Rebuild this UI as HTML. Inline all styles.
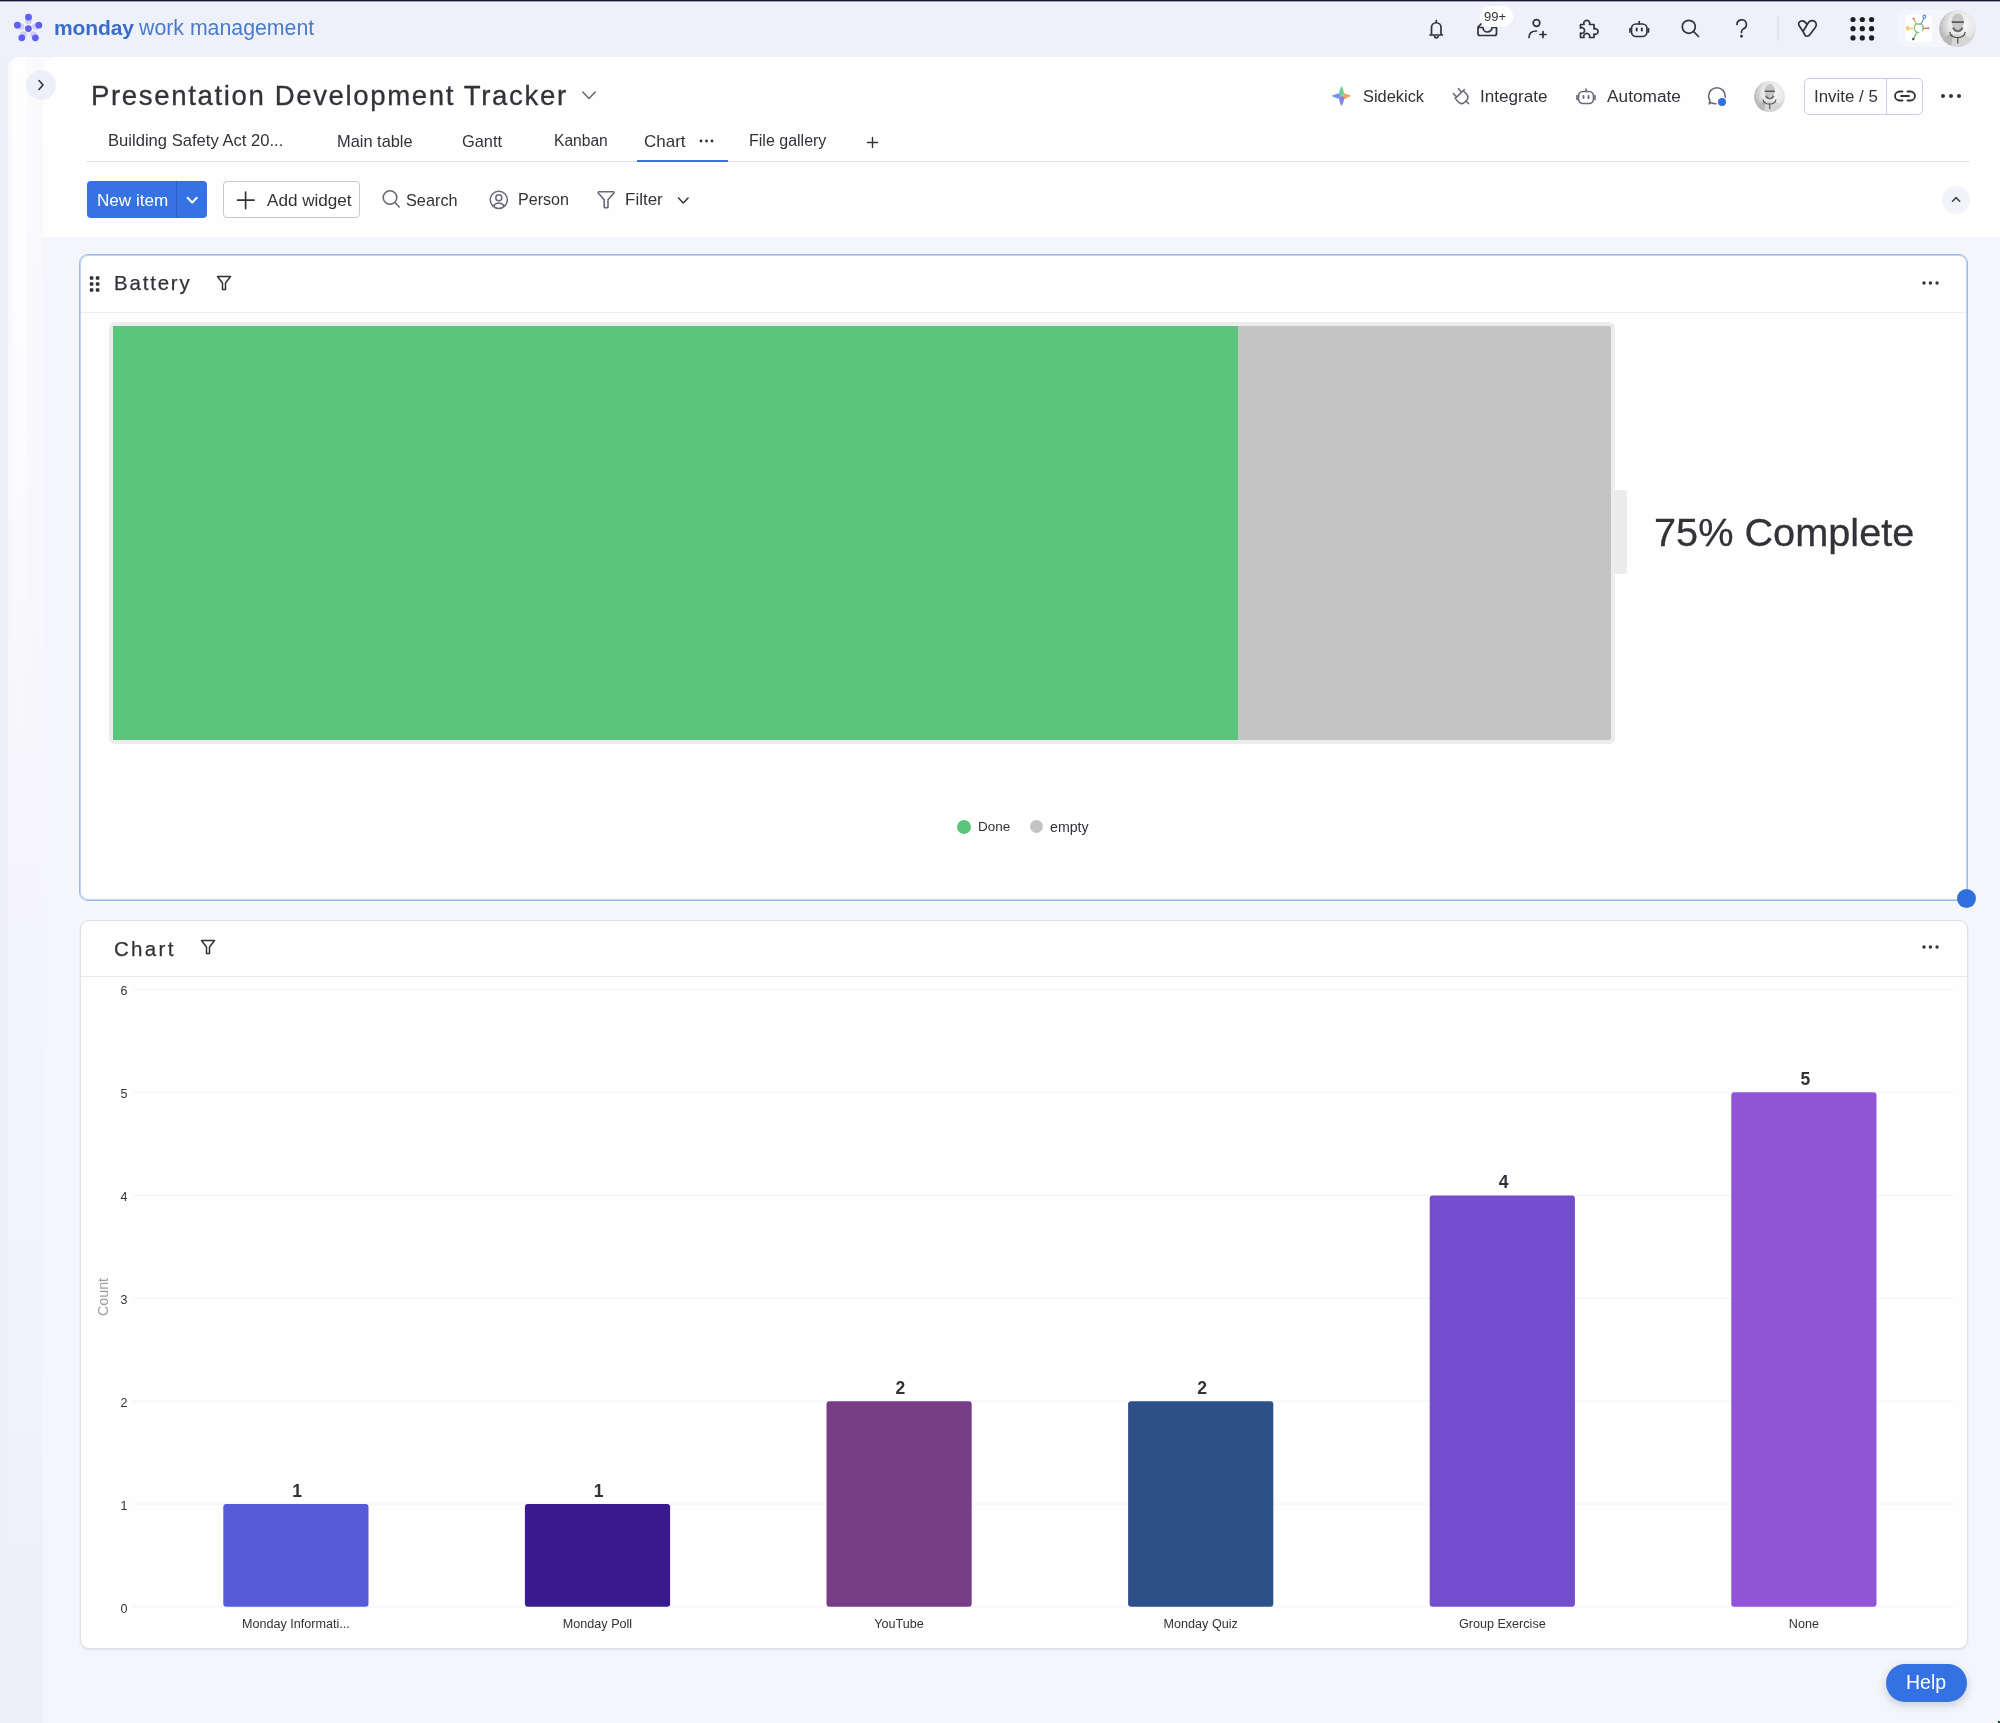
<!DOCTYPE html>
<html><head><meta charset="utf-8">
<style>
*{box-sizing:border-box;margin:0;padding:0}
html,body{width:2000px;height:1723px;overflow:hidden;background:#edf0f9;font-family:"Liberation Sans",sans-serif;color:#323338}
.a{position:absolute}
#topbar{left:0;top:0;width:2000px;height:57px;background:#eef1f9;border-top:2px solid #1d2039}
#side{left:8px;top:57px;width:40px;height:1666px;border-radius:10px 0 0 0;background:linear-gradient(180deg,#fafafd 0,#f8f7fc 450px,#f4f5fb 900px,#f3f4fa 1250px,#edf0f9 1560px)}
#side2{left:12px;top:57px;width:15px;height:700px;border-radius:8px 0 0 0;background:linear-gradient(180deg,#fefeff 0,#fdfdff 200px,rgba(248,247,252,0) 700px)}
#main{left:43px;top:57px;width:1957px;height:180px;background:#fefeff;border-radius:10px 0 0 0}
#dash{left:43px;top:237px;width:1957px;height:1486px;background:#f5f6fb}
.ico{position:absolute}
.t{position:absolute;white-space:nowrap;line-height:1;will-change:transform}
</style></head>
<body>
<svg width="0" height="0" style="position:absolute"><defs>
<radialGradient id="avbg" cx=".62" cy=".38" r=".62"><stop offset="0" stop-color="#fbfbfb"/><stop offset=".6" stop-color="#e6e6e6"/><stop offset="1" stop-color="#b9b9b9"/></radialGradient>
<clipPath id="avc"><circle cx="18.5" cy="18.5" r="18.5"/></clipPath>
<g id="av"><g clip-path="url(#avc)">
<circle cx="18.5" cy="18.5" r="18.5" fill="url(#avbg)"/>
<path d="M1 37C3 28 8 24 18.5 24S34 28 36 37Z" fill="#d6d6d6"/>
<path d="M1 37C3 28 8 24 14 24L12 37Z" fill="#b8b8b8"/>
<ellipse cx="18.8" cy="11.5" rx="6.2" ry="8" fill="#c6c6c6"/>
<path d="M12.8 12.2h12" stroke="#5a5a5a" stroke-width="1.8"/>
<path d="M14 17.5c1.2 2.6 2.8 3.6 4.8 3.6s3.6-1 4.8-3.6" stroke="#6f6f6f" stroke-width="2.2" fill="none"/>
<path d="M10.8 22C11.2 25.5 14.5 27.5 18.5 27.5C22.5 27.5 25.8 25.5 26.2 22M18.8 27.5v6" stroke="#2e2e2e" stroke-width="1.2" fill="none" opacity=".85"/>
</g></g></defs></svg>
<!-- TOP BAR -->
<div id="topbar" class="a"></div>
<div class="a" style="left:0;top:0;width:2000px;height:1px;background:#161a38"></div>
<div class="a" style="left:0;top:1px;width:2000px;height:1px;background:#9a9db2"></div>
<div class="a" style="left:0;top:2px;width:2000px;height:1px;background:#f6f9ff"></div>
<svg class="a" style="left:8px;top:8px" width="40" height="40" viewBox="8 8 40 40">
 <g fill="#c9c6f5" opacity=".8">
  <circle cx="28.5" cy="21" r="3.3"/><circle cx="21" cy="26.5" r="3.3"/><circle cx="35.5" cy="26.5" r="3.3"/><circle cx="23.5" cy="34.5" r="3.3"/><circle cx="33.5" cy="34.5" r="3.3"/>
 </g>
 <g fill="#5f5ff1">
  <circle cx="28.5" cy="17.2" r="3.4"/><circle cx="17.4" cy="25.2" r="3.4"/><circle cx="38.8" cy="25.2" r="3.4"/><circle cx="28.4" cy="28.6" r="3.4"/><circle cx="21.8" cy="37.8" r="3.4"/><circle cx="35.4" cy="37.8" r="3.4"/>
 </g>
</svg>
<div class="t" style="left:54px;top:17px;font-size:21px;font-weight:bold;color:#3a6dc6;letter-spacing:-0.1px">monday</div>
<div class="t" style="left:139px;top:18px;font-size:21.3px;color:#4a7acd">work management</div>

<svg class="a" style="left:1400px;top:0" width="600" height="57" viewBox="1400 0 600 57" fill="none" stroke="#323338" stroke-width="1.7" stroke-linecap="round" stroke-linejoin="round">
 <!-- bell -->
 <path d="M1430 35h12.5M1431.5 35v-7.5a4.75 4.75 0 0 1 9.5 0V35M1436.25 20.5v2.2M1434.5 36.5a1.9 1.9 0 0 0 3.6 0"/>
 <!-- inbox -->
 <path d="M1478 27v6.5a2 2 0 0 0 2 2h14.5a2 2 0 0 0 2-2V27.5h-4.5a4.5 4.5 0 0 1-9 0H1478M1481 24l-3 3"/>
 <!-- person add -->
 <circle cx="1536.5" cy="23" r="3.3"/>
 <path d="M1529 37.5c0-4.5 3.2-6.5 7.5-6.5M1543 31.5v6M1540 34.5h6"/>
 <!-- puzzle -->
 <path d="M1580.5 24.5h3.5a3 3 0 1 1 5.5 0h4.5v4.5a2.8 2.8 0 1 1 0 5v3.5h-4.5a3 3 0 1 0-5.5 0H1580.5v-4.5a2.8 2.8 0 1 0 0-5z"/>
 <!-- robot -->
 <rect x="1631.5" y="24" width="15.5" height="12.5" rx="4.5"/>
 <path d="M1639.25 21.5v2.5M1630 28.5v3.5M1648.5 28.5v3.5"/>
 <path d="M1636.7 28.5v2M1641.8 28.5v2" stroke-width="2"/>
 <!-- search -->
 <circle cx="1688.8" cy="26.8" r="6.5"/>
 <path d="M1693.5 31.5l5 5"/>
 <!-- question -->
 <path d="M1737 24.5a4.7 4.7 0 1 1 6.3 4.4c-1.3.6-1.8 1.4-1.8 2.8v.8"/>
 <circle cx="1741.5" cy="36.2" r="0.6" fill="#323338"/>
 <!-- separator -->
 <path d="M1778 16.5v24" stroke="#d0d4e4" stroke-width="1"/>
 <!-- heart -->
 <path d="M1803 31.5L1799.2 25.8C1797.6 23 1799.6 20.6 1802.5 20.8C1804.5 21 1806 22.5 1807.2 24.5ZM1807.2 24.5C1808.5 22 1810.5 20.6 1812.6 20.7C1815.8 21 1817.2 24.2 1815.6 27L1809.8 34.8C1808.6 36.6 1806 36.8 1804.9 35L1803 31.5"/>
</svg>
<!-- badge -->
<div class="a" style="left:1480px;top:6px;width:33px;height:21px;border-radius:10px;background:#fff"></div>
<div class="t" style="left:1484px;top:10px;font-size:13px;color:#323338">99+</div>
<!-- grid dots -->
<svg class="a" style="left:1848px;top:14px" width="30" height="30" viewBox="0 0 30 30" fill="#1f1f23">
 <circle cx="5" cy="5.5" r="2.6"/><circle cx="14.3" cy="5.5" r="2.6"/><circle cx="23.6" cy="5.5" r="2.6"/>
 <circle cx="5" cy="14.7" r="2.6"/><circle cx="14.3" cy="14.7" r="2.6"/><circle cx="23.6" cy="14.7" r="2.6"/>
 <circle cx="5" cy="23.9" r="2.6"/><circle cx="14.3" cy="23.9" r="2.6"/><circle cx="23.6" cy="23.9" r="2.6"/>
</svg>
<!-- apps box -->
<div class="a" style="left:1898px;top:10px;width:62px;height:37px;border-radius:6px;background:#f5f6fc"></div>
<div class="a" style="left:1905px;top:14.5px;width:27px;height:27.5px;border-radius:5px;background:#fff"></div>
<svg class="a" style="left:1900px;top:10px" width="36" height="36" viewBox="1900 10 36 36" fill="none" stroke-width="1.3" stroke-linecap="round">
 <path d="M1914.3 28.3C1914.3 26 1915 24.5 1916 24H1921.4C1922.5 25 1923.3 26.5 1923.3 28.3L1922.5 30.8M1914.3 28.3C1914.6 30 1915.4 31.5 1916.6 32.3L1918.6 32.4" stroke="#7cc77a"/>
 <path d="M1916 23.6L1914 19.2" stroke="#e8a070"/><circle cx="1913.6" cy="18.6" r="1.2" fill="#e98c7a" stroke="none"/>
 <path d="M1921.4 23.6L1924 18" stroke="#6b9be3"/><circle cx="1924.4" cy="16.6" r="1.5" stroke="#5b8fe0" stroke-width="1.2"/>
 <path d="M1914 28.3H1909.2" stroke="#f0c869"/><circle cx="1907.7" cy="28.3" r="1.6" stroke="#f0c869" stroke-width="1.3" fill="#f7dc95"/>
 <path d="M1923.4 28.3H1927" stroke="#e5646a"/><circle cx="1928.2" cy="28.3" r="1.3" fill="#e98a80" stroke="none"/>
 <path d="M1917 32.3L1913.6 38.6" stroke="#6fbf75"/><circle cx="1913.3" cy="39.1" r="1.3" fill="#3b6e48" stroke="none"/>
</svg>
<!-- avatar top -->
<svg class="a" style="left:1939px;top:10px" width="37" height="37" viewBox="0 0 37 37"><use href="#av"/></svg>

<!-- SIDEBAR + MAIN HEADER -->
<div id="side" class="a"></div>
<div id="side2" class="a"></div>
<div id="dash" class="a"></div>
<div id="main" class="a"></div>
<div class="a" style="left:26px;top:70px;width:30px;height:30px;border-radius:50%;background:#edf0f9"></div>
<svg class="a" style="left:28px;top:72px" width="26" height="26" viewBox="0 0 26 26" fill="none" stroke="#323338" stroke-width="1.6" stroke-linecap="round" stroke-linejoin="round"><path d="M11 8.5l4 4.5-4 4.5"/></svg>

<div class="t" style="left:91px;top:82px;font-size:27.6px;letter-spacing:1.62px;color:#323338;-webkit-text-stroke:0.3px #323338">Presentation Development Tracker</div>
<svg class="a" style="left:580px;top:86px" width="18" height="18" viewBox="0 0 18 18" fill="none" stroke="#676879" stroke-width="1.6" stroke-linecap="round" stroke-linejoin="round"><path d="M2.8 6l6.2 6.5 6.2-6.5"/></svg>

<!-- right header -->
<svg class="a" style="left:1326px;top:82px" width="30" height="28" viewBox="1326 82 30 28">
 <defs><clipPath id="skc"><path d="M1341.5 86C1342.6 87.5 1343.6 91 1344 93.3C1346.5 94 1349.5 94.8 1351.2 96C1349.5 97.2 1346.5 98 1344 98.7C1343.6 101 1342.6 104.5 1341.5 106C1340.4 104.5 1339.4 101 1339 98.7C1336.5 98 1333.5 97.2 1331.6 96C1333.5 94.8 1336.5 94 1339 93.3C1339.4 91 1340.4 87.5 1341.5 86Z"/></clipPath></defs>
 <g clip-path="url(#skc)">
  <path d="M1341.5 96L1326 82H1356Z" fill="#64cf9b"/>
  <path d="M1341.5 96L1356 82V110Z" fill="#e9a962"/>
  <path d="M1341.5 96L1356 102V110H1343Z" fill="#ec6872"/>
  <path d="M1341.5 96L1356 110H1326Z" fill="#8883e6"/>
  <path d="M1341.5 96L1326 110V82Z" fill="#6e95e9"/>
 </g>
</svg>
<div class="t" style="left:1363px;top:87.5px;font-size:16.4px;color:#323338">Sidekick</div>
<svg class="a" style="left:1440px;top:80px" width="40" height="30" viewBox="1440 80 40 30" fill="none" stroke="#676879" stroke-width="1.5" stroke-linecap="round" stroke-linejoin="round">
 <path d="M1455 98.6L1464.4 89.5M1458.4 88.5L1461.1 91.8M1453.3 93.6L1456.4 96.8M1463.2 90.7L1466.3 93.8C1468.4 95.9 1468.4 98.6 1466.3 100.7L1465 102C1463 104 1460.4 104 1458.4 102L1456.3 99.8M1465.8 100.9L1468.7 103.8"/>
</svg>
<div class="t" style="left:1479.5px;top:87.5px;font-size:17.1px;color:#323338">Integrate</div>
<svg class="a" style="left:1575px;top:85px" width="22" height="22" viewBox="0 0 22 22" fill="none" stroke="#676879" stroke-width="1.6" stroke-linecap="round" stroke-linejoin="round">
 <rect x="3.5" y="6.5" width="15" height="12" rx="4.5"/>
 <path d="M11 4v2.5M2 10.5v4M20 10.5v4"/>
 <path d="M8.5 11v2M13.5 11v2" stroke-width="1.9"/>
</svg>
<div class="t" style="left:1607px;top:87.5px;font-size:17.3px;color:#323338">Automate</div>
<svg class="a" style="left:1700px;top:80px" width="32" height="32" viewBox="1700 80 32 32" fill="none" stroke="#676879" stroke-width="1.6" stroke-linecap="round" stroke-linejoin="round">
 <path d="M1716 103.8C1714 103.8 1712.3 103.3 1711.2 102.6L1709.2 103.8L1709.9 100.6C1709 99.2 1708.6 97.6 1708.6 96A8.3 8.3 0 0 1 1725.2 96C1725.2 97 1725.1 97.8 1724.9 98.6"/>
 <circle cx="1722" cy="102" r="4.6" fill="#2e6fe0" stroke="#fff" stroke-width="1.2"/>
</svg>
<svg class="a" style="left:1754px;top:81px" width="31" height="31" viewBox="0 0 37 37"><use href="#av"/></svg>
<div class="a" style="left:1804px;top:78px;width:119px;height:37px;border:1px solid #c9ccda;border-radius:5px"></div>
<div class="a" style="left:1886px;top:78px;width:1px;height:37px;background:#c9ccda"></div>
<div class="t" style="left:1814px;top:89px;font-size:16.9px;color:#323338">Invite / 5</div>
<svg class="a" style="left:1893px;top:85px" width="24" height="22" viewBox="0 0 24 22" fill="none" stroke="#323338" stroke-width="1.8" stroke-linecap="round">
 <path d="M9.5 6.5h-3a4.5 4.5 0 0 0 0 9h3M14.5 6.5h3a4.5 4.5 0 0 1 0 9h-3M8 11h8"/>
</svg>
<svg class="a" style="left:1938px;top:90px" width="26" height="12" viewBox="0 0 26 12" fill="#323338"><circle cx="5" cy="6" r="2"/><circle cx="13" cy="6" r="2"/><circle cx="21" cy="6" r="2"/></svg>

<!-- tabs -->
<div class="t" style="left:107.5px;top:133px;font-size:16.6px;color:#323338">Building Safety Act 20...</div>
<div class="t" style="left:337px;top:133px;font-size:16.4px;color:#323338">Main table</div>
<div class="t" style="left:462px;top:133px;font-size:16.4px;color:#323338">Gantt</div>
<div class="t" style="left:554px;top:133px;font-size:15.6px;color:#323338">Kanban</div>
<div class="t" style="left:644px;top:133px;font-size:17px;color:#323338">Chart</div>
<svg class="a" style="left:698px;top:135.5px" width="18" height="10" viewBox="0 0 18 10" fill="#323338"><circle cx="3" cy="5" r="1.4"/><circle cx="8.5" cy="5" r="1.4"/><circle cx="14" cy="5" r="1.4"/></svg>
<div class="t" style="left:749px;top:133px;font-size:16px;color:#323338">File gallery</div>
<svg class="a" style="left:864px;top:134px" width="16" height="16" viewBox="0 0 16 16" fill="none" stroke="#323338" stroke-width="1.4" stroke-linecap="round"><path d="M8.5 3.5v10M3.5 8.5h10"/></svg>
<div class="a" style="left:86px;top:161px;width:1884px;height:1px;background:#dfe2ee"></div>
<div class="a" style="left:637px;top:160px;width:91px;height:2px;background:#3a72e4"></div>

<!-- toolbar -->
<div class="a" style="left:87px;top:181px;width:120px;height:37px;border-radius:4px;background:#3672e3"></div>
<div class="a" style="left:176px;top:181px;width:1px;height:37px;background:#2a5cc0"></div>
<div class="t" style="left:96.5px;top:192px;font-size:17.1px;color:#fff">New item</div>
<svg class="a" style="left:182px;top:190px" width="20" height="20" viewBox="0 0 20 20" fill="none" stroke="#fff" stroke-width="2" stroke-linecap="round" stroke-linejoin="round"><path d="M5.6 7.8l4.6 4.8 4.6-4.8"/></svg>
<div class="a" style="left:223px;top:181px;width:137px;height:37px;border-radius:4px;border:1px solid #c5c7d4;background:#fff"></div>
<svg class="a" style="left:234px;top:189px" width="22" height="22" viewBox="0 0 22 22" fill="none" stroke="#323338" stroke-width="1.7" stroke-linecap="round"><path d="M11.6 3.2v16.4M3.6 11.2h16.4"/></svg>
<div class="t" style="left:266.5px;top:192px;font-size:17.1px;color:#323338">Add widget</div>
<svg class="a" style="left:380px;top:188px" width="22" height="22" viewBox="0 0 22 22" fill="none" stroke="#676879" stroke-width="1.6" stroke-linecap="round"><circle cx="10" cy="9.5" r="6.8"/><path d="M15 14.5l4.2 4.5"/></svg>
<div class="t" style="left:405.5px;top:192px;font-size:16.3px;color:#323338">Search</div>
<svg class="a" style="left:488px;top:189px" width="22" height="22" viewBox="0 0 22 22" fill="none" stroke="#676879" stroke-width="1.5" stroke-linecap="round"><circle cx="10.8" cy="10.8" r="8.6"/><circle cx="10.8" cy="8.8" r="3"/><path d="M5.2 17.3c1.5-2.3 3.3-3.3 5.6-3.3s4.1 1 5.6 3.3"/></svg>
<div class="t" style="left:518px;top:191px;font-size:16.1px;color:#323338">Person</div>
<svg class="a" style="left:595px;top:188px" width="22" height="22" viewBox="0 0 22 22" fill="none" stroke="#676879" stroke-width="1.6" stroke-linejoin="round" stroke-linecap="round"><path d="M4 3.8h14.2c.8 0 1.1.8.6 1.4L13 11.8v7.2c0 .6-.5.8-1 .8h-2c-.5 0-.8-.3-.8-.8v-7.2L3.4 5.2C2.9 4.6 3.2 3.8 4 3.8z"/></svg>
<div class="t" style="left:625px;top:191px;font-size:17px;color:#323338">Filter</div>
<svg class="a" style="left:674px;top:190px" width="18" height="18" viewBox="0 0 18 18" fill="none" stroke="#323338" stroke-width="1.5" stroke-linecap="round" stroke-linejoin="round"><path d="M4.5 8l4.8 5 4.8-5"/></svg>
<div class="a" style="left:1942px;top:186px;width:28px;height:28px;border-radius:50%;background:#f3f4f9"></div>
<svg class="a" style="left:1942px;top:186px" width="28" height="28" viewBox="0 0 28 28" fill="none" stroke="#45464f" stroke-width="1.6" stroke-linecap="round" stroke-linejoin="round"><path d="M10.5 15.2l3.6-3.6 3.6 3.6"/></svg>

<!-- BATTERY WIDGET -->
<div class="a" style="left:79px;top:254px;width:1889px;height:647px;border:1px solid #9cbaee;box-shadow:inset 0 0 0 1px #c4d5f4;border-radius:9px;background:#fefeff"></div>
<div class="a" style="left:81px;top:312px;width:1885px;height:1px;background:#eceef4"></div>
<svg class="a" style="left:86px;top:273px" width="16" height="22" viewBox="0 0 16 22" fill="#323338">
 <rect x="3.8" y="3.2" width="3.6" height="3.6" rx=".8"/><rect x="9.8" y="3.2" width="3.6" height="3.6" rx=".8"/>
 <rect x="3.8" y="9.2" width="3.6" height="3.6" rx=".8"/><rect x="9.8" y="9.2" width="3.6" height="3.6" rx=".8"/>
 <rect x="3.8" y="15.2" width="3.6" height="3.6" rx=".8"/><rect x="9.8" y="15.2" width="3.6" height="3.6" rx=".8"/>
</svg>
<div class="t" style="left:114px;top:273px;font-size:20.4px;letter-spacing:1.85px;color:#323338;-webkit-text-stroke:0.25px #323338">Battery</div>
<svg class="a" style="left:213px;top:273px" width="22" height="20" viewBox="0 0 22 20" fill="none" stroke="#323338" stroke-width="1.5" stroke-linejoin="round"><path d="M4.5 3.5h13l-5 6.5v6.5h-3V10z"/></svg>
<svg class="a" style="left:1917px;top:277px" width="26" height="12" viewBox="0 0 26 12" fill="#323338"><circle cx="7" cy="6" r="1.7"/><circle cx="13.4" cy="6" r="1.7"/><circle cx="20" cy="6" r="1.7"/></svg>

<div class="a" style="left:109px;top:322px;width:1506px;height:422px;border:4px solid #ececec;border-radius:6px;background:#c4c4c4"></div>
<div class="a" style="left:113px;top:326px;width:1125px;height:414px;background:#5cc57c"></div>
<div class="a" style="left:1615px;top:490px;width:12px;height:84px;border-radius:0 3px 3px 0;background:#ececec"></div>
<div class="t" style="left:1654px;top:513px;font-size:39.7px;color:#323338;-webkit-text-stroke:0.3px #323338">75% Complete</div>

<div class="a" style="left:956.5px;top:819.5px;width:14px;height:14px;border-radius:50%;background:#5cc57c"></div>
<div class="t" style="left:978px;top:820px;font-size:13.5px;color:#323338">Done</div>
<div class="a" style="left:1029.5px;top:819.5px;width:13px;height:13px;border-radius:50%;background:#c4c4c4"></div>
<div class="t" style="left:1050px;top:820px;font-size:14.2px;color:#323338">empty</div>
<div class="a" style="left:1956.5px;top:889px;width:19px;height:19px;border-radius:50%;background:#2f70de"></div>

<!-- CHART WIDGET -->
<div class="a" style="left:80px;top:920px;width:1888px;height:729px;border:1px solid #dfe1ea;border-radius:9px;background:#fefeff;box-shadow:0 1px 2px rgba(180,185,205,.35)"></div>
<div class="a" style="left:81px;top:976px;width:1886px;height:1px;background:#e6e8ef"></div>
<div class="t" style="left:114px;top:939px;font-size:20.5px;letter-spacing:2.3px;color:#323338;-webkit-text-stroke:0.25px #323338">Chart</div>
<svg class="a" style="left:197px;top:937px" width="22" height="20" viewBox="0 0 22 20" fill="none" stroke="#323338" stroke-width="1.5" stroke-linejoin="round"><path d="M4.5 3.5h13l-5 6.5v6.5h-3V10z"/></svg>
<svg class="a" style="left:1917px;top:941px" width="26" height="12" viewBox="0 0 26 12" fill="#323338"><circle cx="7" cy="6" r="1.7"/><circle cx="13.4" cy="6" r="1.7"/><circle cx="20" cy="6" r="1.7"/></svg>

<svg class="a" style="left:0;top:0" width="2000" height="1723" viewBox="0 0 2000 1723">
 <g stroke="#f1f2f7" stroke-width="1">
  <path d="M133 989.3H1954M133 1092.3H1954M133 1195.4H1954M133 1298.3H1954M133 1401.2H1954M133 1504.1H1954M133 1606.8H1954"/>
 </g>
 <g>
  <rect x="223.3" y="1504" width="145.2" height="102.8" rx="3" fill="#575bd8"/>
  <rect x="524.9" y="1504" width="145.2" height="102.8" rx="3" fill="#3b1a8d"/>
  <rect x="826.5" y="1401.2" width="145.2" height="205.6" rx="3" fill="#763f85"/>
  <rect x="1128.1" y="1401.2" width="145.2" height="205.6" rx="3" fill="#2e5089"/>
  <rect x="1429.7" y="1195.4" width="145.2" height="411.4" rx="3" fill="#734dcb"/>
  <rect x="1731.3" y="1092.3" width="145.2" height="514.5" rx="3" fill="#9254d6"/>
 </g>
 <g font-family="Liberation Sans" font-size="12.5" fill="#323338" text-anchor="end">
  <text x="127.5" y="995">6</text><text x="127.5" y="1098">5</text><text x="127.5" y="1201">4</text><text x="127.5" y="1304">3</text><text x="127.5" y="1407">2</text><text x="127.5" y="1509.5">1</text><text x="127.5" y="1612.5">0</text>
 </g>
 <text transform="translate(107.8 1297) rotate(-90)" font-family="Liberation Sans" font-size="14.3" fill="#9c9ca4" text-anchor="middle">Count</text>
 <g font-family="Liberation Sans" font-size="17.5" font-weight="bold" fill="#323338" text-anchor="middle">
  <text x="297" y="1496.5">1</text><text x="598.6" y="1496.5">1</text><text x="900.4" y="1393.7">2</text><text x="1202" y="1393.7">2</text><text x="1503.6" y="1187.8">4</text><text x="1805.4" y="1084.7">5</text>
 </g>
 <g font-family="Liberation Sans" font-size="12.6" fill="#323338" text-anchor="middle">
  <text x="295.9" y="1628.2">Monday Informati...</text><text x="597.5" y="1628.2">Monday Poll</text><text x="899.1" y="1628.2">YouTube</text><text x="1200.7" y="1628.2">Monday Quiz</text><text x="1502.3" y="1628.2">Group Exercise</text><text x="1803.9" y="1628.2">None</text>
 </g>
</svg>

<!-- HELP -->
<div class="a" style="left:1886px;top:1664px;width:81px;height:38px;border-radius:19px;background:#3372e0;box-shadow:0 3px 10px rgba(40,50,90,.22)"></div>
<div class="t" style="left:1906px;top:1673px;font-size:19.5px;color:#fff">Help</div>

<div class="a" style="left:1998px;top:1721px;width:2px;height:2px;background:#1d4a2a"></div>

</body></html>
